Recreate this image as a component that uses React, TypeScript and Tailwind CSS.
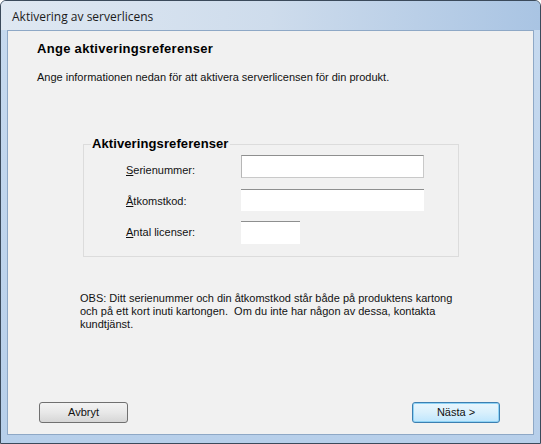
import React from "react";

export default function App() {
  const font = { fontFamily: '"Liberation Sans", Arial, sans-serif' };
  return (
    <div
      className="w-[541px] h-[444px] border border-[#3b4a5b] rounded-t-[6px] bg-gradient-to-b from-[#c7daef] to-[#b7cfea] flex flex-col overflow-hidden"
      style={font}
    >
      <div className="h-[29px] shrink-0 flex items-center pl-[11px] pt-[3px] bg-gradient-to-r from-[#dfe8f2] via-[#cedcec] to-[#a9c4e3]">
        <span className="text-[12px] text-[#1b1b1b]" style={{ fontFamily: '"Open Sans", "Liberation Sans", sans-serif' }}>
          Aktivering av serverlicens
        </span>
      </div>
      <div className="flex-1 px-[6px] pb-[8px] flex">
        <div className="flex-1 border border-[#8ea8c6] bg-[#f1f1f1] flex flex-col text-[11px] text-[#111]">
          <div className="pl-[29px] pt-[10px] text-[13px] font-bold tracking-[0.3px] leading-[16px] text-black">
            Ange aktiveringsreferenser
          </div>
          <div className="pl-[29px] pt-[13px] leading-[14px]">
            Ange informationen nedan för att aktivera serverlicensen för din produkt.
          </div>
          <fieldset className="ml-[75px] mt-[52px] w-[376px] h-[121px] border border-[#dcdcdc] p-0">
            <legend className="ml-[7px] px-[1px] text-[13px] font-bold tracking-[0.1px] leading-[16px] text-black">
              Aktiveringsreferenser
            </legend>
            <div className="pl-[42px] mt-[3px] flex flex-col">
              <div className="flex items-start h-[34px]">
                <span className="w-[115px] pt-[8px] leading-[14px]">
                  <span className="underline">S</span>erienummer:
                </span>
                <div className="w-[183px] h-[23px] bg-white border border-[#c9c9c9] border-t-[#8e8f8f] border-l-[#b6b6b6]" />
              </div>
              <div className="flex items-start h-[32px]">
                <span className="w-[115px] pt-[5px] leading-[14px]">
                  <span className="underline">Å</span>tkomstkod:
                </span>
                <div className="w-[183px] h-[22px] bg-white border-t border-[#8e8f8f]" />
              </div>
              <div className="flex items-start h-[23px]">
                <span className="w-[115px] pt-[4px] leading-[14px]">
                  <span className="underline">A</span>ntal licenser:
                </span>
                <div className="w-[59px] h-[23px] bg-white border-t border-[#8e8f8f]" />
              </div>
            </div>
          </fieldset>
          <div className="pl-[72px] pt-[35px] leading-[13px] w-[460px]">
            OBS: Ditt serienummer och din åtkomstkod står både på produktens kartong och på ett kort inuti kartongen.&nbsp; Om du inte har någon av dessa, kontakta kundtjänst.
          </div>
          <div className="mt-auto mb-[11px] flex justify-between pl-[31px] pr-[33px]">
            <button className="w-[89px] h-[21px] rounded-[3px] border border-[#707070] bg-gradient-to-b from-[#f3f3f3] via-[#e8e8e8] to-[#d6d6d6] text-[11px] text-[#111]">
              Avbryt
            </button>
            <button className="w-[88px] h-[21px] rounded-[3px] border border-[#3c7fb1] bg-gradient-to-b from-[#eaf6fd] via-[#d9f0fc] to-[#bee6fd] text-[11px] text-[#111] shadow-[inset_0_0_0_1px_#8fd3f5]">
              Nästa &gt;
            </button>
          </div>
        </div>
      </div>
    </div>
  );
}
